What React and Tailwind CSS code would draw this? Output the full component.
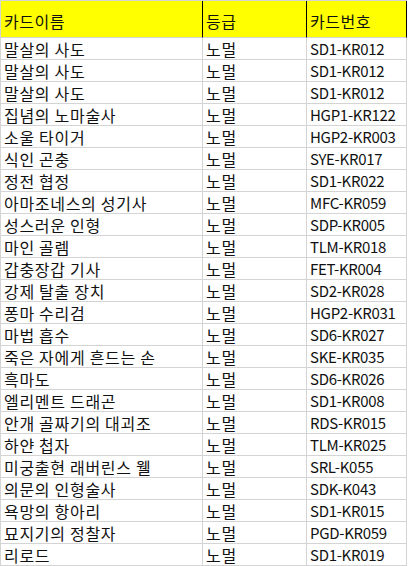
import React from 'react';

const rows = [
  ['말살의 사도', '노멀', 'SD1-KR012'],
  ['말살의 사도', '노멀', 'SD1-KR012'],
  ['말살의 사도', '노멀', 'SD1-KR012'],
  ['집념의 노마술사', '노멀', 'HGP1-KR122'],
  ['소울 타이거', '노멀', 'HGP2-KR003'],
  ['식인 곤충', '노멀', 'SYE-KR017'],
  ['정전 협정', '노멀', 'SD1-KR022'],
  ['아마조네스의 성기사', '노멀', 'MFC-KR059'],
  ['성스러운 인형', '노멀', 'SDP-KR005'],
  ['마인 골렘', '노멀', 'TLM-KR018'],
  ['갑충장갑 기사', '노멀', 'FET-KR004'],
  ['강제 탈출 장치', '노멀', 'SD2-KR028'],
  ['퐁마 수리검', '노멀', 'HGP2-KR031'],
  ['마법 흡수', '노멀', 'SD6-KR027'],
  ['죽은 자에게 흔드는 손', '노멀', 'SKE-KR035'],
  ['흑마도', '노멀', 'SD6-KR026'],
  ['엘리멘트 드래곤', '노멀', 'SD1-KR008'],
  ['안개 골짜기의 대괴조', '노멀', 'RDS-KR015'],
  ['하얀 첩자', '노멀', 'TLM-KR025'],
  ['미궁출현 래버린스 웰', '노멀', 'SRL-K055'],
  ['의문의 인형술사', '노멀', 'SDK-K043'],
  ['욕망의 항아리', '노멀', 'SD1-KR015'],
  ['묘지기의 정찰자', '노멀', 'PGD-KR059'],
  ['리로드', '노멀', 'SD1-KR019'],
];

const widths = ['w-[202px]', 'w-[104px]', 'w-[100px]'];
const sizes = [
  'text-[16px] tracking-[0.7px]',
  'text-[16px] tracking-[0.7px]',
  'text-[15px] tracking-[-0.3px]',
];

const App = () => {
  return (
    <div
      className="bg-white min-h-[566px] text-[#111] leading-none"
      style={{ fontFamily: '"Noto Sans CJK KR", "Noto Sans", sans-serif' }}
    >
      <div className="w-[407px] border-l border-t border-[#d4d4d4]">
        {/* Header */}
        <div className="flex h-[37px]">
          {['카드이름', '등급', '카드번호'].map((h, i) => (
            <div
              key={h}
              className={`${widths[i]} text-[16px] tracking-[0.5px] bg-[#ffff00] border-r border-b border-r-black border-b-[#d4d4d4] flex items-end pl-[3px] pb-[8px]`}
            >
              {h}
            </div>
          ))}
        </div>

        {/* Body */}
        {rows.map((r, idx) => (
          <div key={idx} className="flex h-[22px]">
            {r.map((c, i) => (
              <div
                key={i}
                className={`${widths[i]} ${sizes[i]} border-r border-b border-[#d4d4d4] flex items-center pl-[3px] whitespace-nowrap overflow-hidden`}
              >
                {c}
              </div>
            ))}
          </div>
        ))}
      </div>
    </div>
  );
};

export default App;
